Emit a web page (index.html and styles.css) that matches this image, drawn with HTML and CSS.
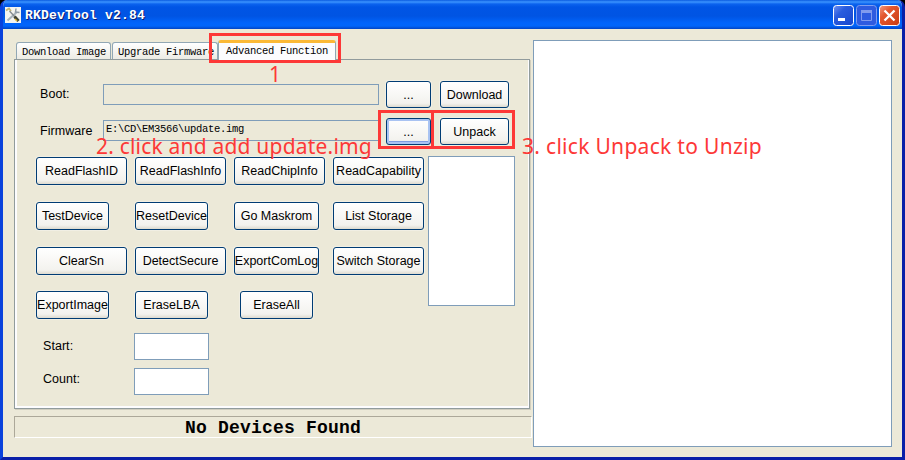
FILE: index.html
```html
<!DOCTYPE html>
<html lang="en">
<head>
<meta charset="utf-8">
<title>RKDevTool v2.84</title>
<link rel="stylesheet" href="styles.css">
</head>
<body>
<div class="window">
  <header class="titlebar">
    <svg class="app-icon" width="16" height="16" viewBox="0 0 16 16">
      <rect width="16" height="16" fill="#f4f4f0"/>
      <path d="M2.500 13.500L12 5" stroke="#a9b3ba" stroke-width="2"/>
      <path d="M11 1.500L10.500 5L14.500 5.500" fill="none" stroke="#8f9ba5" stroke-width="1.5"/>
      <path d="M1 3.500L4 1.500L6 4" fill="none" stroke="#c5b876" stroke-width="1.800"/>
      <path d="M4.500 4L10 10" stroke="#868c8f" stroke-width="1.400"/>
      <path d="M9.500 9.500L13.500 14" stroke="#3f4434" stroke-width="3"/>
      <path d="M10 12L12 14" stroke="#e5b93a" stroke-width="1.4"/>
    </svg>
    <h1 class="title">RKDevTool v2.84</h1>
    <div class="controls">
      <svg class="control" width="21" height="22" viewBox="0 0 21 22">
        <defs>
          <linearGradient id="blue" x1="0" y1="0" x2="1" y2="1"><stop offset="0" stop-color="#7191f2"/><stop offset=".35" stop-color="#295cde"/><stop offset="1" stop-color="#1746cd"/></linearGradient>
          <linearGradient id="red" x1="0" y1="0" x2="1" y2="1"><stop offset="0" stop-color="#f19b82"/><stop offset=".35" stop-color="#e3572e"/><stop offset="1" stop-color="#c93c12"/></linearGradient>
        </defs>
        <rect x=".5" y=".5" width="20" height="20" rx="3" fill="url(#blue)" stroke="#fff"/>
        <rect x="5" y="13" width="7" height="3" fill="#fff"/>
      </svg>
      <svg class="control" width="21" height="22" viewBox="0 0 21 22">
        <rect x=".5" y=".5" width="20" height="20" rx="3" fill="#2e5be0" stroke="#7f9df0"/>
        <path d="M5.5 6v9.500h10V6" fill="none" stroke="#819bee"/>
        <rect x="5" y="5" width="11" height="3" fill="#819bee"/>
      </svg>
      <svg class="control" width="21" height="22" viewBox="0 0 21 22">
        <rect x=".5" y=".5" width="20" height="20" rx="3" fill="url(#red)" stroke="#fff"/>
        <path d="M5.500 5.500l10 10M15.500 5.500l-10 10" stroke="#fff" stroke-width="2.300"/>
      </svg>
    </div>
  </header>
  <main class="client">
    <section class="left">
      <nav class="tabs">
        <span class="tab tab-download">Download Image</span>
        <span class="tab tab-upgrade">Upgrade Firmware</span>
        <span class="tab tab-active">Advanced Function</span>
      </nav>
      <div class="panel">
        <div class="file-row">
          <label class="label">Boot:</label>
          <div class="field"></div>
          <button class="btn browse">...</button>
          <button class="btn action">Download</button>
        </div>
        <div class="file-row second">
          <label class="label firmware">Firmware</label>
          <div class="field">E:\CD\EM3566\update.img</div>
          <button class="btn browse focused">...</button>
          <button class="btn action">Unpack</button>
        </div>
        <div class="tools">
          <div class="buttons">
            <button class="btn">ReadFlashID</button>
            <button class="btn">ReadFlashInfo</button>
            <button class="btn">ReadChipInfo</button>
            <button class="btn">ReadCapability</button>
            <button class="btn small">TestDevice</button>
            <button class="btn small">ResetDevice</button>
            <button class="btn medium">Go Maskrom</button>
            <button class="btn">List Storage</button>
            <button class="btn">ClearSn</button>
            <button class="btn">DetectSecure</button>
            <button class="btn medium">ExportComLog</button>
            <button class="btn">Switch Storage</button>
            <button class="btn small">ExportImage</button>
            <button class="btn small">EraseLBA</button>
            <button class="btn small offset">EraseAll</button>
          </div>
          <div class="list"></div>
        </div>
        <div class="range">
          <label class="label">Start:</label><div class="number"></div>
          <label class="label">Count:</label><div class="number"></div>
        </div>
      </div>
      <footer class="status">No Devices Found</footer>
    </section>
    <section class="log"></section>
  </main>
  <div class="mark mark-tab"></div>
  <div class="mark mark-browse"></div>
  <div class="mark mark-unpack"></div>
  <div class="note note-one">1</div>
  <div class="note note-two">2. click and add update.img</div>
  <div class="note note-three">3. click Unpack to Unzip</div>
</div>
</body>
</html>
```
FILE: styles.css
```css
* { box-sizing: border-box; }
body { margin: 0; background: #000; font: 12px "Liberation Sans", Arial, sans-serif; color: #000; }
.window {
  position: relative; width: 905px; height: 460px; display: flex; flex-direction: column;
  border: solid #0a42dc; border-width: 0 3px 3px; border-right-color: #0a1fa8; border-bottom-color: #0a1fa8;
  border-radius: 7px 7px 0 0; background: #ece9d8; overflow: hidden;
}
.titlebar {
  height: 29px; margin: 0 -3px; padding: 3px 5px 0; display: flex; flex: none;
  background: linear-gradient(#0a5be0 0, #3b94ff 2px, #0b63ee 4px, #0055e5 7px, #0054e3 16px, #0064fb 23px, #0065fa 26px, #0144c4 29px);
}
.app-icon { margin-top: 4px; }
.title {
  margin: 4px 0 0 4px; font: bold 13px/18px "Liberation Mono", monospace; letter-spacing: .2px;
  color: #fff; text-shadow: 1px 1px #0b1e72; white-space: pre;
}
.controls { margin-left: auto; padding: 2px 0 0; display: flex; gap: 2px; }
.client { display: flex; flex: 1; gap: 1px; padding: 11px 10px 10px 11px; }
.left { width: 518px; flex: none; display: flex; flex-direction: column; }
.tabs { height: 19px; display: flex; align-items: flex-end; font: 10.500px/17px "Liberation Mono", monospace; letter-spacing: -.3px; }
.tab {
  height: 17px; padding: 1px 0 0 5px; border: 1px solid #91a7b4; border-bottom: 0; border-radius: 3px 3px 0 0;
  background: linear-gradient(#fff, #ecebe4); white-space: pre; overflow: hidden;
}
.tab-download { width: 95px; margin-left: 2px; }
.tab-upgrade { width: 106px; margin-left: 1px; }
.tab-active {
  position: relative; width: 118px; height: 20px; margin: 0 0 -1px; padding: 0 0 0 7px;
  background: #fcfcfe; border-top: 3px solid #fbb936;
}
.panel {
  width: 516px; height: 350px; padding: 21px 0 0; border: 1px solid #919b9c;
  box-shadow: inset 2px 0 #fcfcfe, inset -1px -2px #fcfcfe, 1px 1px #d0cebf;
}
.file-row { display: flex; height: 27px; align-items: flex-start; }
.file-row.second { margin-top: 10px; }
.label { letter-spacing: .05px; font-size: 12.500px; line-height: 15px; }
.file-row .label { width: 63px; margin: 6px 0 0 25px; }
.field {
  width: 276px; height: 21px; margin: 3px 7px 0 0; padding: 0 2px; border: 1px solid #7f9db9;
  font: 10.500px/17px "Liberation Mono", monospace; letter-spacing: -.3px;
}
.second .field { margin-top: 2px; }
.btn {
  width: 91px; height: 28px; padding: 0; border: 1px solid #003c74; border-radius: 3px; color: #000;
  background: linear-gradient(#fff, #f3f2ee 85%, #dedbd0); font: 12.500px/26px "Liberation Sans", Arial, sans-serif;
  letter-spacing: 0; white-space: nowrap; display: flex; justify-content: center; box-shadow: 0 0 0 1px #f1efe4;
}
.browse { width: 45px; height: 27px; margin-right: 9px; }
.action { width: 69px; height: 27px; }
.focused { box-shadow: inset 0 0 0 2px #a9c3f2, inset 0 -3px #7e9be0; }
.tools { display: flex; padding: 11px 0 0 21px; }
.buttons {
  width: 392px; padding-top: 1px; display: grid; grid-template-columns: repeat(4, 91px);
  grid-template-rows: 45px 45px 44px 28px; column-gap: 8px; align-items: start; align-content: start;
}
.small { width: 73px; }
.medium { width: 85px; }
.offset { margin-left: 6px; }
.list { width: 87px; height: 150px; background: #fff; border: 1px solid #7f9db9; }
.range {
  display: grid; grid-template-columns: 91px 75px; row-gap: 8px; margin: 14px 0 0 28px;
}
.range .label { margin-top: 6px; }
.range .label:nth-of-type(2) { margin-top: 4px; }
.number { height: 27px; background: #fff; border: 1px solid #7f9db9; }
.status {
  width: 518px; height: 22px; margin-top: 7px; text-align: center;
  border: 1px solid #fff; border-top-color: #aca899; border-left-color: #aca899;
  font: bold 18px/22px "Liberation Mono", monospace; letter-spacing: .2px;
}
.log { flex: 1; background: #fff; border: 1px solid #7f9db9; }
.mark { position: absolute; border: 3px solid #fd3837; }
.mark-tab { left: 206px; top: 33px; width: 132px; height: 30px; }
.mark-browse { left: 375px; top: 110px; width: 56px; height: 39px; }
.mark-unpack { left: 428px; top: 110px; width: 84px; height: 39px; }
.note { position: absolute; font: 21px/24px "Noto Sans", sans-serif; letter-spacing: .2px; color: #fd3837; white-space: pre; }
.note-one { left: 266px; top: 62px; }
.note-two { left: 93px; top: 134px; }
.note-three { left: 519px; top: 134px; letter-spacing: .3px; }
```
